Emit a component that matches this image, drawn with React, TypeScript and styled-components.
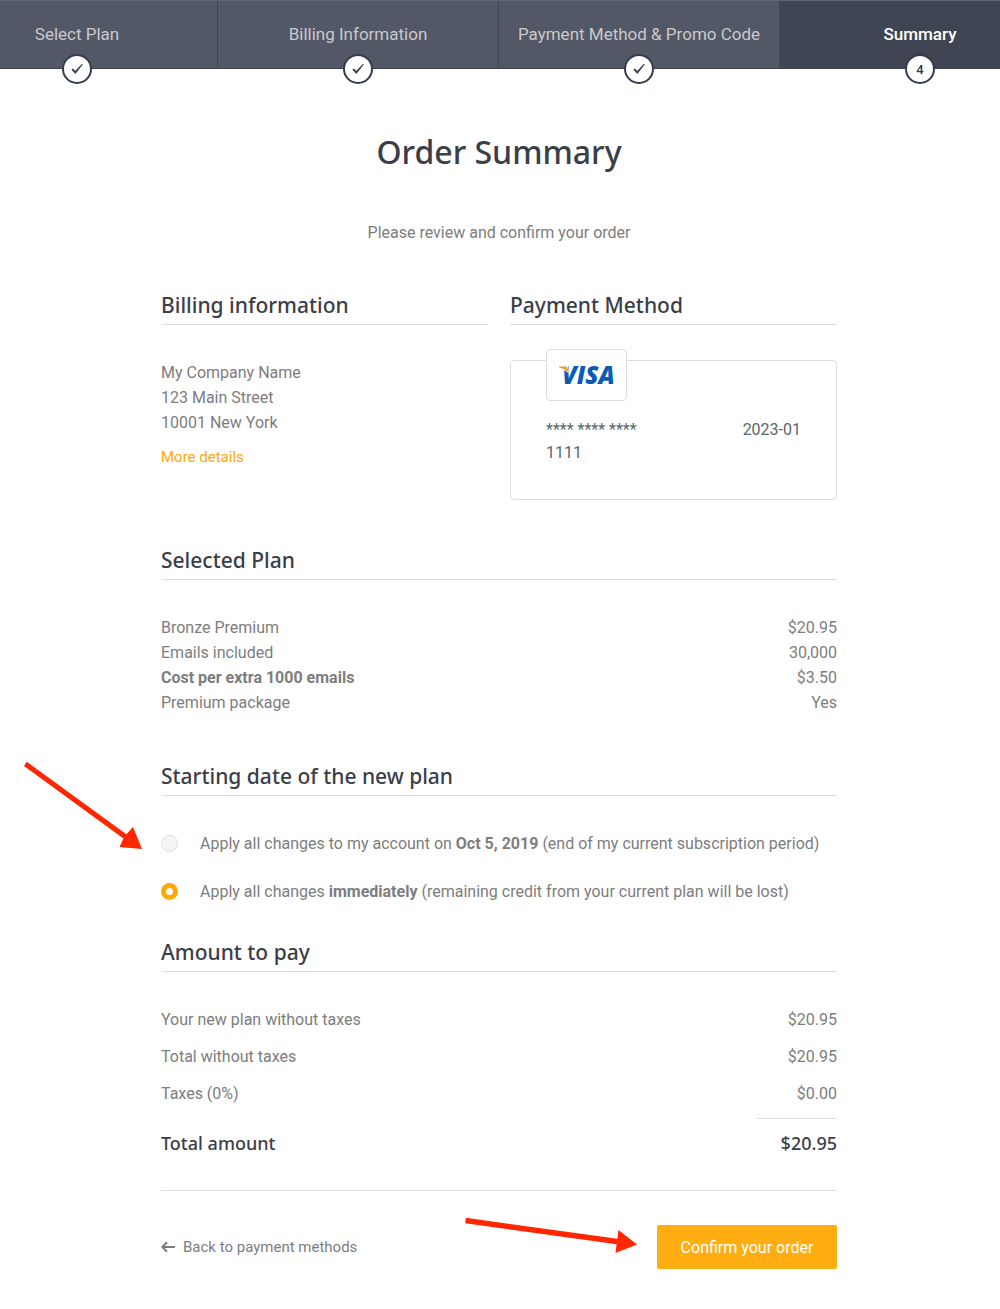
import React, { useState } from "react";
import styled, { createGlobalStyle, css } from "styled-components";

const color = {
  heading: "#3b3e47",
  text: "#7d7d7d",
  line: "#dcdde0",
  navy: "#404553",
  step: "#535866",
  orange: "#ffa800",
  button: "#ffad10",
  arrow: "#ff2600",
};

const GlobalStyle = createGlobalStyle`
  *, *::before, *::after { box-sizing: border-box; }
  body {
    margin: 0;
    background: #fff;
    color: ${color.text};
    font: 400 16px/25px Roboto, "Liberation Sans", sans-serif;
  }
`;

const headingFont = css`
  font-family: "Noto Sans", "Open Sans", sans-serif;
  font-weight: 500;
  color: ${color.heading};
`;

const StepBar = styled.nav`
  overflow: hidden;
  padding-bottom: 20px;
`;

const StepList = styled.ol`
  display: flex;
  justify-content: center;
  margin: 0;
  padding: 0 2px 0 0;
  list-style: none;
  background: ${color.navy};
`;

const Step = styled.li<{ $current?: boolean }>`
  position: relative;
  flex: 0 0 281px;
  height: 69px;
  display: flex;
  align-items: center;
  justify-content: center;
  background: ${(p) => (p.$current ? color.navy : color.step)};
  border-right: 1px solid ${color.navy};
  border-top: 1px solid #5f6573;
  border-bottom: 1px solid ${color.navy};
`;

const StepLink = styled.a<{ $current?: boolean }>`
  white-space: nowrap;
  text-decoration: none;
  font-size: 17px;
  color: ${(p) => (p.$current ? "#fff" : "#c9c9cc")};
  font-weight: ${(p) => (p.$current ? 500 : 400)};
`;

const Badge = styled.span`
  position: absolute;
  bottom: -16px;
  left: 50%;
  width: 30px;
  height: 30px;
  margin-left: -15px;
  display: flex;
  align-items: center;
  justify-content: center;
  border: 2px solid #343b4d;
  border-radius: 50%;
  background: #fff;
  color: #343b4d;
  font-size: 13px;
  font-weight: 500;
`;

const Page = styled.main`
  max-width: 678px;
  margin: 0 auto;
  padding: 38px 2px 40px 0;
`;

const Title = styled.h1`
  ${headingFont}
  margin: 0;
  font-size: 32px;
  line-height: 50px;
  text-align: center;
`;

const Intro = styled.p`
  margin: 43px 0 45px;
  text-align: center;
`;

const Columns = styled.div`
  display: grid;
  grid-template-columns: 1fr 1fr;
  gap: 22px;
`;

const Section = styled.section<{ $space?: number }>`
  margin-top: ${(p) => p.$space ?? 0}px;
`;

const SectionTitle = styled.h2`
  ${headingFont}
  margin: 0 0 35px;
  padding-bottom: 4px;
  border-bottom: 1px solid ${color.line};
  font-size: 21px;
  line-height: 30px;
`;

const Address = styled.address`
  font-style: normal;
  margin-bottom: 9px;
`;

const DetailsLink = styled.a`
  color: ${color.orange};
  font-size: 15px;
  text-decoration: none;
`;

const Card = styled.div`
  position: relative;
  display: flex;
  justify-content: space-between;
  height: 140px;
  padding: 57px 35px 0;
  border: 1px solid ${color.line};
  border-radius: 4px;
  color: #5a666d;
  line-height: 23px;
`;

const CardBrand = styled.div`
  position: absolute;
  top: -12px;
  left: 35px;
  width: 81px;
  height: 52px;
  display: flex;
  align-items: center;
  justify-content: center;
  border: 1px solid ${color.line};
  border-radius: 4px;
  background: #fff;
`;

const CardNumber = styled.span`
  width: 120px;
`;

const Table = styled.table`
  width: 100%;
  border-spacing: 0;
`;

const Label = styled.th<{ $strong?: boolean }>`
  padding: 0;
  text-align: left;
  font-weight: ${(p) => (p.$strong ? 700 : 400)};
`;

const Value = styled.td`
  width: 80px;
  padding: 0;
  text-align: right;
`;

const AmountTable = styled(Table)`
  ${Label}, ${Value} {
    padding-bottom: 12px;
  }
  tfoot ${Label}, tfoot ${Value} {
    ${headingFont}
    padding: 9px 0 0;
    font-size: 18px;
    line-height: 30px;
  }
  tfoot ${Value} {
    border-top: 1px solid ${color.line};
  }
`;

const Options = styled.div`
  position: relative;
  display: grid;
  gap: 23px;
`;

const Option = styled.label`
  display: flex;
  align-items: center;
  gap: 22px;
  cursor: pointer;
`;

const Radio = styled.input`
  appearance: none;
  flex: none;
  width: 17px;
  height: 17px;
  margin: 0;
  border: 1px solid #dddee0;
  border-radius: 50%;
  background: #f5f5f6;

  &:checked {
    border: 5px solid ${color.orange};
    background: #fff;
  }
`;

const Footer = styled.footer`
  position: relative;
  display: flex;
  align-items: center;
  justify-content: space-between;
  margin-top: 32px;
  padding-top: 34px;
  border-top: 1px solid ${color.line};
`;

const BackLink = styled.a`
  display: flex;
  align-items: center;
  gap: 8px;
  color: ${color.text};
  font-size: 15px;
  text-decoration: none;
`;

const ConfirmButton = styled.button`
  width: 180px;
  height: 44px;
  border: 0;
  border-radius: 2px;
  background: ${color.button};
  color: #fff;
  font: inherit;
  cursor: pointer;
`;

const Arrow = styled.svg<{ $left: number; $top: number }>`
  position: absolute;
  left: ${(p) => p.$left}px;
  top: ${(p) => p.$top}px;
  fill: ${color.arrow};
  pointer-events: none;
`;

const steps = ["Select Plan", "Billing Information", "Payment Method & Promo Code", "Summary"];

const planRows = [
  { label: "Bronze Premium", value: "$20.95" },
  { label: "Emails included", value: "30,000" },
  { label: "Cost per extra 1000 emails", value: "$3.50", strong: true },
  { label: "Premium package", value: "Yes" },
];

const amountRows = [
  { label: "Your new plan without taxes", value: "$20.95" },
  { label: "Total without taxes", value: "$20.95" },
  { label: "Taxes (0%)", value: "$0.00" },
];

const Check = () => (
  <svg width="12" height="12" viewBox="0 0 12 12" aria-hidden="true">
    <path d="M0.4 6.6 L2 5.4 L4.2 7.9 L11 0.8 L11.8 1.4 L4.3 11 Z" fill="#343b4d" />
  </svg>
);

const VisaLogo = () => (
  <svg width="78" height="40" viewBox="-10 -10 78 40" role="img" aria-label="Visa">
    <text x="4" y="19" fontFamily="Open Sans, Noto Sans, sans-serif" fontSize="24" fontWeight="800" fontStyle="italic" fill="#0a5bb5">
      VISA
    </text>
    <path d="M0 0 H9.6 L11 9 C9 6.4 6 4.6 0 3 Z" fill="#fff" />
    <path d="M1 1.6 H7.6 Q9.2 1.6 9.6 3.2 L11 8.6 C9 5.6 6 3.4 1 2.4 Z" fill="#f5a01d" />
  </svg>
);

export default function App() {
  const [start, setStart] = useState("now");

  return (
    <>
      <GlobalStyle />
      <StepBar aria-label="Order steps">
        <StepList>
          {steps.map((name, i) => {
            const current = i === steps.length - 1;
            return (
              <Step key={name} $current={current}>
                <StepLink href="#" $current={current} aria-current={current ? "step" : undefined}>
                  {name}
                </StepLink>
                <Badge>{current ? i + 1 : <Check />}</Badge>
              </Step>
            );
          })}
        </StepList>
      </StepBar>

      <Page>
        <Title>Order Summary</Title>
        <Intro>Please review and confirm your order</Intro>

        <Columns>
          <Section>
            <SectionTitle>Billing information</SectionTitle>
            <Address>
              My Company Name
              <br />
              123 Main Street
              <br />
              10001 New York
            </Address>
            <DetailsLink href="#">More details</DetailsLink>
          </Section>
          <Section>
            <SectionTitle>Payment Method</SectionTitle>
            <Card>
              <CardBrand>
                <VisaLogo />
              </CardBrand>
              <CardNumber>**** **** **** 1111</CardNumber>
              <span>2023-01</span>
            </Card>
          </Section>
        </Columns>

        <Section $space={45}>
          <SectionTitle>Selected Plan</SectionTitle>
          <Table>
            <tbody>
              {planRows.map((row) => (
                <tr key={row.label}>
                  <Label scope="row" $strong={row.strong}>{row.label}</Label>
                  <Value>{row.value}</Value>
                </tr>
              ))}
            </tbody>
          </Table>
        </Section>

        <Section $space={46}>
          <SectionTitle>Starting date of the new plan</SectionTitle>
          <Options role="radiogroup" aria-label="Starting date of the new plan">
            <Option>
              <Radio type="radio" name="start" checked={start === "later"} onChange={() => setStart("later")} />
              <span>
                Apply all changes to my account on <b>Oct 5, 2019</b> (end of my current subscription period)
              </span>
            </Option>
            <Option>
              <Radio type="radio" name="start" checked={start === "now"} onChange={() => setStart("now")} />
              <span>
                Apply all changes <b>immediately</b> (remaining credit from your current plan will be lost)
              </span>
            </Option>
            <Arrow $left={-137} $top={-70} width="120" height="92" viewBox="0 0 120 92" aria-hidden="true">
              <path d="M2.8 0.8 L102.4 73.2 L109 66 L118 88 L95.5 86 L99.4 77.4 L0 5 Z" />
            </Arrow>
          </Options>
        </Section>

        <Section $space={33}>
          <SectionTitle>Amount to pay</SectionTitle>
          <AmountTable>
            <tbody>
              {amountRows.map((row) => (
                <tr key={row.label}>
                  <Label scope="row">{row.label}</Label>
                  <Value>{row.value}</Value>
                </tr>
              ))}
            </tbody>
            <tfoot>
              <tr>
                <Label scope="row">Total amount</Label>
                <Value>$20.95</Value>
              </tr>
            </tfoot>
          </AmountTable>
        </Section>

        <Footer>
          <BackLink href="#">
            <svg width="14" height="12" viewBox="0 0 14 12" fill="none" stroke="currentColor" strokeWidth="2" aria-hidden="true">
              <path d="M14 6 H1.5 M6 1.2 L1.3 6 L6 10.8" />
            </svg>
            Back to payment methods
          </BackLink>
          <ConfirmButton type="button">Confirm your order</ConfirmButton>
          <Arrow $left={304} $top={25} width="172" height="38" viewBox="0 0 172 38" aria-hidden="true">
            <path d="M0.8 1.8 L152.4 22.8 L153.5 14 L172 28.5 L150.5 37 L151.6 28.3 L0.2 7.3 Z" />
          </Arrow>
        </Footer>
      </Page>
    </>
  );
}
